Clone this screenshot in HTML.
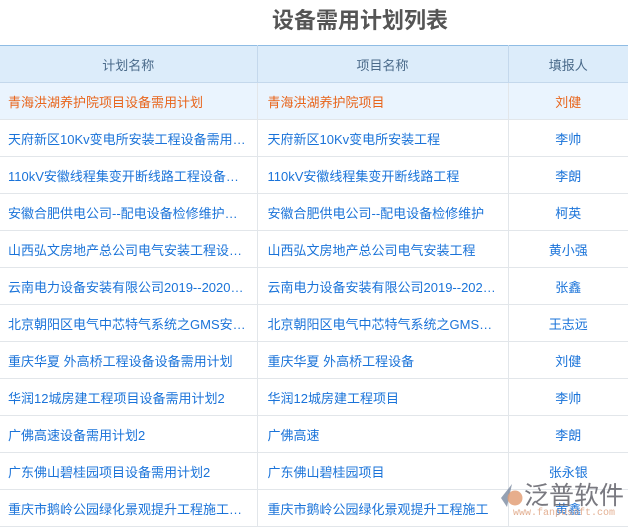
<!DOCTYPE html>
<html><head><meta charset="utf-8"><style>
body{margin:0;width:628px;height:527px;overflow:hidden;background:#fff;font-family:"Liberation Sans","Noto Sans CJK SC",sans-serif;position:relative}
h1{margin:0;position:absolute;top:5px;left:0;width:628px;text-align:center;padding-left:92px;box-sizing:border-box;font-size:22px;color:#555;font-weight:bold;line-height:32px}
table{position:absolute;top:45px;left:0;width:628px;border-collapse:collapse;table-layout:fixed;font-size:13px}
td,th{height:36px;border:1px solid #e2e6ea;padding:0 8px;white-space:nowrap;overflow:hidden;text-overflow:ellipsis;color:#1a73d9;font-weight:normal;text-align:left}
td:nth-child(2){padding-left:10px}
th{background:#dcecfa;color:#4a6a8a;text-align:center;border-color:#c4d8ec;border-top:1px solid #8fbce4}
td:nth-child(3){text-align:center}
tr.hl td{background:#eaf4fe;color:#e8651c}
td:first-child,th:first-child{border-left:none}
td:last-child,th:last-child{border-right:none}
.lt{position:absolute;left:524px;top:476px;font-size:25px;color:#6b6b73;letter-spacing:0px;opacity:.9}
.lu{position:absolute;left:513px;top:508px;font-size:10px;color:#e0a888;font-family:"Liberation Mono",monospace;opacity:.9}
</style></head><body>
<h1>设备需用计划列表</h1>
<table>
<colgroup><col style="width:257px"><col style="width:251px"><col style="width:120px"></colgroup>
<tr><th>计划名称</th><th>项目名称</th><th>填报人</th></tr>
<tr class="hl"><td>青海洪湖养护院项目设备需用计划</td><td>青海洪湖养护院项目</td><td>刘健</td></tr>
<tr><td>天府新区10Kv变电所安装工程设备需用计划</td><td>天府新区10Kv变电所安装工程</td><td>李帅</td></tr>
<tr><td>110kV安徽线程集变开断线路工程设备需用计划</td><td>110kV安徽线程集变开断线路工程</td><td>李朗</td></tr>
<tr><td>安徽合肥供电公司--配电设备检修维护计划</td><td>安徽合肥供电公司--配电设备检修维护</td><td>柯英</td></tr>
<tr><td>山西弘文房地产总公司电气安装工程设备计划</td><td>山西弘文房地产总公司电气安装工程</td><td>黄小强</td></tr>
<tr><td>云南电力设备安装有限公司2019--2020年计划</td><td>云南电力设备安装有限公司2019--2020年</td><td>张鑫</td></tr>
<tr><td>北京朝阳区电气中芯特气系统之GMS安装计划</td><td>北京朝阳区电气中芯特气系统之GMS安装</td><td>王志远</td></tr>
<tr><td>重庆华夏 外高桥工程设备设备需用计划</td><td>重庆华夏 外高桥工程设备</td><td>刘健</td></tr>
<tr><td>华润12城房建工程项目设备需用计划2</td><td>华润12城房建工程项目</td><td>李帅</td></tr>
<tr><td>广佛高速设备需用计划2</td><td>广佛高速</td><td>李朗</td></tr>
<tr><td>广东佛山碧桂园项目设备需用计划2</td><td>广东佛山碧桂园项目</td><td>张永银</td></tr>
<tr><td>重庆市鹅岭公园绿化景观提升工程施工计划</td><td>重庆市鹅岭公园绿化景观提升工程施工</td><td>黄鑫</td></tr>
</table>
<svg style="position:absolute;left:499px;top:483px" width="26" height="26" viewBox="0 0 26 26"><path d="M13 1 L2 15 L8 24 Z" fill="#7a8aa0" opacity=".8"/><circle cx="16" cy="15" r="7.5" fill="#e3a078" opacity=".85"/></svg>
<div class="lt">泛普软件</div>
<div class="lu">www.fanpusoft.com</div>
</body></html>
